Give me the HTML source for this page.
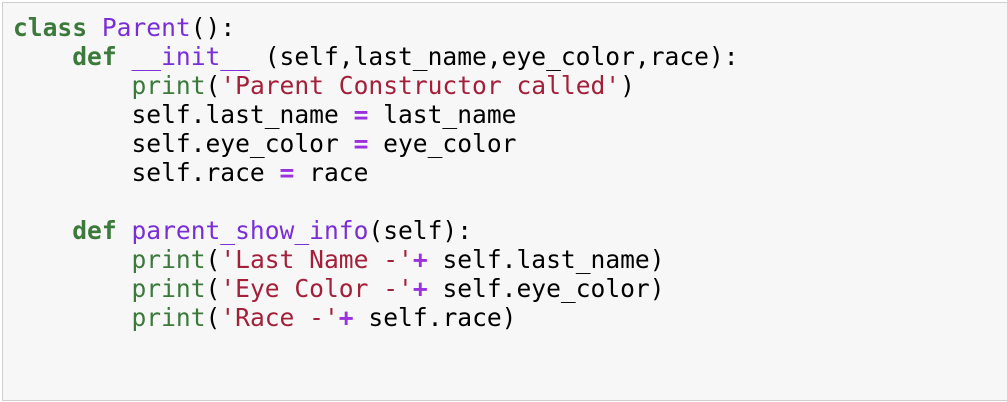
<!DOCTYPE html>
<html><head><style>
html,body{margin:0;padding:0;background:#fff;width:1007px;height:402px;overflow:hidden}
.cell{position:absolute;left:2px;top:2px;width:1010px;height:397px;border:1px solid #cfcfcf;background:#f7f7f7}
pre{position:absolute;left:10px;top:10px;margin:0;font-family:"DejaVu Sans Mono","Liberation Mono",monospace;font-size:24.6px;line-height:29px;color:#000}
.k{color:#3b7a3b;font-weight:bold}
.n{color:#7a2fd6}
.b{color:#3b7a3b}
.s{color:#a3203a}
.o{color:#9a30e0;font-weight:bold}
</style></head><body>
<div class="cell"><pre><span class="k">class</span> <span class="n">Parent</span>():
    <span class="k">def</span> <span class="n">__init__</span> (self,last_name,eye_color,race):
        <span class="b">print</span>(<span class="s">'Parent Constructor called'</span>)
        self.last_name <span class="o">=</span> last_name
        self.eye_color <span class="o">=</span> eye_color
        self.race <span class="o">=</span> race

    <span class="k">def</span> <span class="n">parent_show_info</span>(self):
        <span class="b">print</span>(<span class="s">'Last Name -'</span><span class="o">+</span> self.last_name)
        <span class="b">print</span>(<span class="s">'Eye Color -'</span><span class="o">+</span> self.eye_color)
        <span class="b">print</span>(<span class="s">'Race -'</span><span class="o">+</span> self.race)</pre></div>
</body></html>
